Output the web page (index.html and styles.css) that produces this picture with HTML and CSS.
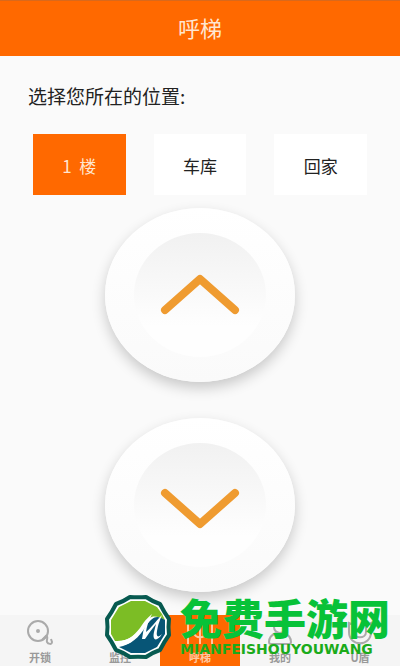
FILE: index.html
```html
<!DOCTYPE HTML>
<html lang="zh-CN">
<head>
<meta charset="utf-8">
<meta name="viewport" content="width=device-width, initial-scale=1">
<title>呼梯</title>
<link rel="stylesheet" href="styles.css">
</head>
<body>

<header class="header">
  <h1>呼梯</h1>
</header>

<main class="content">
  <h2 class="label">选择您所在的位置:</h2>
  <div class="places">
    <button type="button" class="place active">1&nbsp; 楼</button>
    <button type="button" class="place">车库</button>
    <button type="button" class="place">回家</button>
  </div>
  <div class="calls">
    <button type="button" class="call" aria-label="上行">
      <span class="inner">
        <svg width="80" height="44" viewBox="0 0 80 44"><path d="M5 37L40 6L75 37"/></svg>
      </span>
    </button>
    <button type="button" class="call" aria-label="下行">
      <span class="inner">
        <svg width="80" height="52" viewBox="0 0 80 52"><path d="M5 14L40 45L75 14"/></svg>
      </span>
    </button>
  </div>
</main>

<nav class="tabs">
  <a href="#lock">
    <svg width="28" height="28" viewBox="0 0 28 28"><circle cx="12" cy="12" r="10"/><circle cx="12" cy="12" r="1"/><path d="M16 21l4-4c3 1 0 4 1 6s5 3 5 0l-1-3"/></svg>
    开锁
  </a>
  <a href="#monitor">
    <svg width="28" height="28" viewBox="0 0 28 28"><path d="M5 13l14-5 4 8-14 5zM5 16v8M9 22H5"/></svg>
    监控
  </a>
  <a href="#lift" class="active">
    <svg width="28" height="28" viewBox="0 0 28 28"><path d="M2 3v22M26 3v22M14 3v22M8 8v5c0 7 12 7 12 0V8"/></svg>
    呼梯
  </a>
  <a href="#mine">
    <svg width="28" height="28" viewBox="0 0 28 28"><circle cx="14" cy="8" r="6"/><path d="M10 14c-5 2-7 5-7 9 0 2 1 2 2 2h18c1 0 2 0 2-2 0-4-2-7-7-9"/></svg>
    我的
  </a>
  <a href="#ukey">
    <svg width="28" height="28" viewBox="0 0 28 28"><path d="M3 4v9c0 15 22 15 22 0V4l-5 2v7c0 7-12 7-12 0V6z"/></svg>
    U盾
  </a>
</nav>

<div class="brand">
  <svg width="68" height="66" viewBox="0 0 68 66">
    <path class="badge" d="M26 3Q34 3.500 42 3Q48.500 7.500 56 10Q60 18 65 25Q64 33 65 41Q60 48 56 56Q48.500 58.500 42 63Q34 62.500 26 63Q19.500 58.500 12 56Q8 48 3 41Q4 33 3 25Q8 18 12 10Q19.500 7.500 26 3Z"/>
    <path class="green" d="M27 7H41L53 13L58 20L61 26C50 20 46 22 40 30C33 40 25 48 11 47L7 40V26L15 13Z"/>
    <path class="blue" d="M15 53C26 51 35 44 42 32C49 22 53 21 61 26V40L53 53L41 59H27Z"/>
    <path class="mark" d="M11 47C25 48 32 40 38 31Q41 26 48 20Q43 30 42 38C47 34 51 28 58 21Q54 30 53 37C52 43 54 44 58 40C53 48 48 47 50 38L52 30Q47 36 41 45L38 45Q39 36 42 29C34 42 27 53 14 51Z"/>
  </svg>
  <div class="brand-text">
    <strong>免费手游网</strong>
    <span>MIANFEISHOUYOUWANG</span>
  </div>
</div>

</body>
</html>
```
FILE: styles.css
```css
* {
box-sizing:border-box;
}
body {
margin:0;
min-height:100vh;
display:flex;
flex-direction:column;
background:#fafafa;
color:#222;
font-family:"Noto Sans CJK SC", sans-serif;
}
.header {
height:56px;
padding-bottom:4px;
display:flex;
align-items:center;
justify-content:center;
background:#ff6900;
border-top:1px solid #d9691c;
}
.header h1 {
margin:0;
color:#ffe6d0;
font-size:22px;
font-weight:400;
line-height:32px;
}
.content {
flex:1;
padding:28px 28px 0;
}
.label {
margin:0;
font-size:19px;
font-weight:400;
line-height:24px;
}
.places {
display:grid;
grid-template-columns:repeat(3, 1fr);
gap:28px;
margin-top:26px;
padding:0 5px;
}
.place {
height:61px;
padding:2px 0 0;
border:none;
background:white;
color:#222;
font-family:inherit;
font-size:17px;
}
.place.active {
background:#ff6900;
color:#ffe6d0;
}
.calls {
display:flex;
flex-direction:column;
align-items:center;
gap:36px;
margin-top:13px;
}
.call {
width:190px;
height:174px;
padding:0;
display:flex;
justify-content:center;
align-items:center;
border:none;
border-radius:50%;
background:linear-gradient(white, #fafafa);
box-shadow:0 6px 14px rgba(0, 0, 0, 0.2);
}
.inner {
width:132px;
height:124px;
display:flex;
align-items:center;
justify-content:center;
border-radius:50%;
background:linear-gradient(#f1f1f1, #fefefe 75%);
}
.call path {
fill:none;
stroke:#ef9b30;
stroke-width:8;
stroke-linecap:round;
stroke-linejoin:round;
}
.tabs {
height:51px;
display:grid;
grid-template-columns:repeat(5, 1fr);
background:#f5f5f5;
}
.tabs a {
display:flex;
flex-direction:column;
align-items:center;
gap:2px;
padding-top:4px;
color:#999;
font-size:11px;
font-weight:700;
line-height:16px;
text-decoration:none;
}
.tabs svg {
fill:none;
stroke:#aaa;
stroke-width:2;
}
.tabs .active {
background:#ff6900;
color:#ffc9a0;
}
.tabs .active svg {
stroke:#ffc9a0;
}

/* site logo floats over the tab bar */
.brand {
position:absolute;
left:104px;
bottom:6px;
display:flex;
align-items:center;
gap:8px;
pointer-events:none;
}
.brand-text {
display:flex;
flex-direction:column;
color:#08c238;
}
.brand-text strong {
font-size:42px;
font-weight:900;
line-height:44px;
}
.brand-text span {
color:#1bab1b;
font-family:"DejaVu Sans", sans-serif;
font-size:14px;
font-weight:700;
line-height:20px;
}
.badge {
fill:white;
stroke:#075a50;
stroke-width:4;
stroke-linejoin:round;
}
.green {
fill:#7cbd25;
}
.blue {
fill:#075576;
}
.mark {
fill:white;
}
```
